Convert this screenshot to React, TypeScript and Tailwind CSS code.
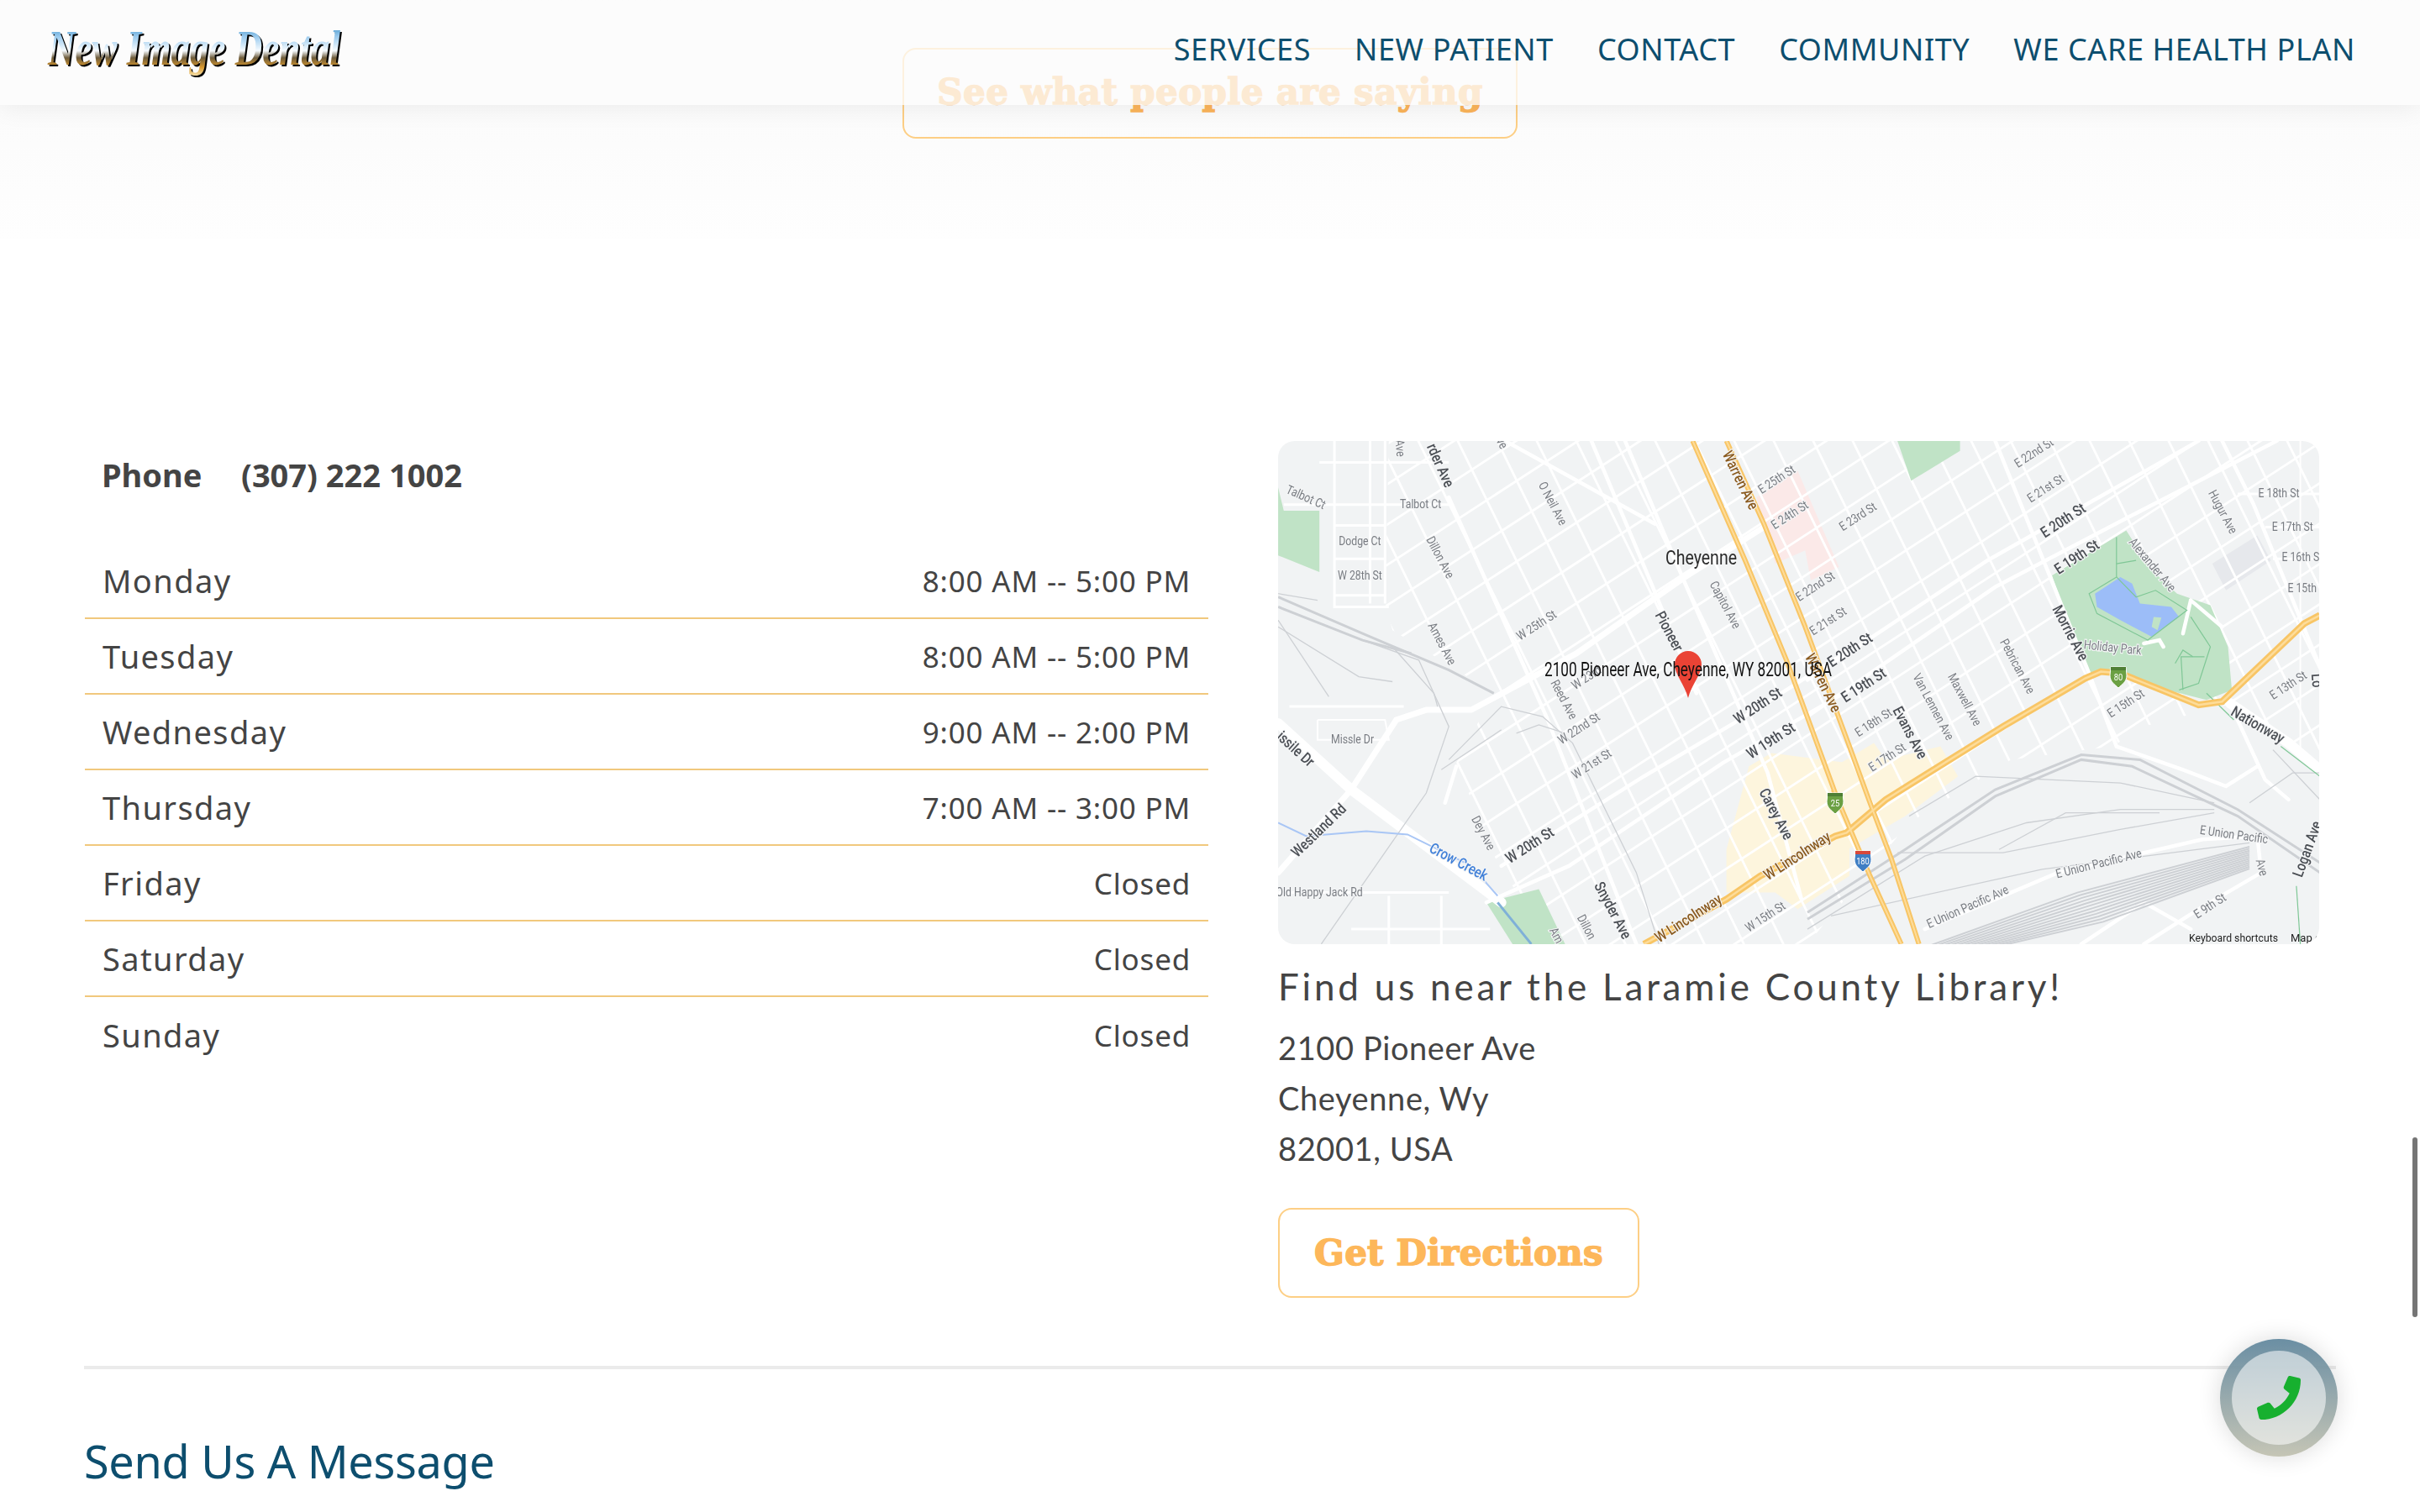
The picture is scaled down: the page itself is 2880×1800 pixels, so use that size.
import { FaPhone } from "react-icons/fa";

const NAV = ["SERVICES", "NEW PATIENT", "CONTACT", "COMMUNITY", "WE CARE HEALTH PLAN"];

const HOURS = [
  ["Monday", "8:00 AM -- 5:00 PM"],
  ["Tuesday", "8:00 AM -- 5:00 PM"],
  ["Wednesday", "9:00 AM -- 2:00 PM"],
  ["Thursday", "7:00 AM -- 3:00 PM"],
  ["Friday", "Closed"],
  ["Saturday", "Closed"],
  ["Sunday", "Closed"],
];

// map coordinates were read off two crops, so each side gets its own conversion
const a = (x: number, y: number) => [x / 2.24 - 20, y / 2.529 - 16];
const b = (x: number, y: number) => [x / 2.148 + 630, y / 2.529 - 16];

const line = (conv: typeof a, pts: number[][], close = false) =>
  pts.map(([x, y], i) => `${i ? "L" : "M"}${conv(x, y).map((n) => n.toFixed(1)).join(" ")}`).join("") + (close ? "Z" : "");

const GREEN = [
  line(a, [[45, 180], [60, 250], [155, 250], [155, 435], [45, 385]], true),
  line(a, [[600, 1430], [740, 1390], [810, 1555], [670, 1555]], true),
  line(b, [[230, 40], [390, 40], [390, 70], [265, 160]], true),
  line(b, [[625, 445], [815, 310], [880, 430], [945, 500], [1030, 535], [1075, 660], [1085, 790], [1020, 820], [920, 790], [810, 745], [720, 740], [690, 660]], true),
];

const CREAM = [
  line(a, [[1240, 1270], [1300, 1020], [1360, 980], [1568, 1010], [1568, 1350], [1430, 1450], [1370, 1400], [1240, 1400]], true),
  line(b, [[0, 1070], [170, 950], [200, 1000], [340, 960], [385, 1050], [250, 1170], [60, 1300], [0, 1420]], true),
];

const ARTERIES = [
  line(a, [[45, 890], [240, 1090], [640, 1430]]),
  line(a, [[45, 1340], [240, 1090], [360, 880], [440, 850], [560, 850], [840, 680], [1130, 450], [1340, 300]]),
  line(b, [[1080, 830], [1230, 950], [1310, 1030]]),
];

const WHITE_MID = [
  line(a, [[600, 1430], [820, 1320], [1230, 1010], [1568, 790]]),
  line(a, [[640, 1320], [1020, 1050], [1260, 890], [1568, 670]]),
  line(a, [[500, 210], [760, 870], [1000, 1555]]),
  line(a, [[970, 40], [1130, 470], [1350, 1040], [1440, 1420]]),
  line(a, [[880, 40], [1040, 470], [1160, 800]]),
  line(a, [[650, 40], [1050, 290]]),
  line(a, [[490, 1130], [520, 1020]]),
  line(b, [[0, 870], [480, 480], [820, 270], [1200, 40]]),
  line(b, [[0, 760], [460, 400], [1000, 40]]),
  line(b, [[480, 40], [720, 740], [790, 960], [960, 1030], [1070, 1080], [1150, 1020]]),
  line(b, [[1060, 40], [1140, 230], [1310, 720]]),
  line(b, [[1080, 830], [1170, 1060], [1230, 1120]]),
  line(b, [[980, 520], [960, 620]]),
  line(b, [[980, 520], [1060, 600]]),
  line(b, [[860, 650], [900, 640], [910, 660]]),
  line(b, [[300, 1510], [640, 1340], [1010, 1240], [1150, 1230]]),
  line(b, [[1150, 1230], [1160, 1340], [1000, 1450], [860, 1555]]),
  line(b, [[700, 1555], [860, 1430], [980, 1510]]),
];

const RAILS_THIN = [
  line(a, [[45, 500], [150, 520]]),
  line(a, [[45, 580], [180, 810]]),
  line(a, [[45, 600], [260, 750], [350, 765]]),
  line(a, [[270, 640], [420, 700], [500, 900], [440, 1100], [160, 1555]]),
  line(a, [[350, 660], [460, 800], [470, 840]]),
  line(a, [[480, 1030], [640, 910]]),
  line(a, [[500, 1000], [640, 840], [750, 870], [830, 950], [1000, 1340], [1060, 1555]]),
  line(a, [[680, 920], [740, 895], [810, 920]]),
  line(b, [[260, 1170], [430, 1050], [800, 1070], [1040, 1130]]),
  line(b, [[230, 1280], [500, 1280], [800, 1210], [1040, 1160]]),
  line(b, [[60, 1470], [600, 1330], [1130, 1250]]),
  line(b, [[1130, 1130], [1240, 1040], [1310, 1040]]),
  line(b, [[1190, 970], [1310, 1120]]),
  line(b, [[0, 1510], [300, 1290], [560, 1190], [800, 1150], [1040, 1150]]),
  line(b, [[490, 1270], [660, 1160], [900, 1160]]),
];

const RAILS_WIDE = [
  line(b, [[0, 1460], [250, 1270], [480, 1090], [700, 985], [850, 1000], [1100, 1150], [1310, 1310]]),
  line(b, [[0, 1480], [250, 1300], [480, 1110], [700, 1000], [830, 1020], [1100, 1170], [1310, 1340]]),
  line(a, [[45, 510], [270, 620], [500, 730], [620, 800]]),
  line(a, [[45, 540], [270, 640], [400, 680]]),
];

// rail yard, a bundle of parallel tracks
const YARD = Array.from({ length: 12 }, (_, i) =>
  line(b, [[300 + i * 16, 1565], [690 + i * 6, 1400 + i * 8], [1130, 1262 + i * 6]]),
);

const THIN_TRAIL = [
  line(b, [[790, 450], [720, 500], [740, 560], [870, 640], [970, 550], [890, 490], [840, 510], [790, 450]]),
  line(b, [[790, 330], [790, 450]]),
  line(b, [[790, 410], [840, 400]]),
  line(b, [[980, 570], [1030, 660], [1000, 770], [950, 790]]),
  line(b, [[960, 790], [955, 690], [1015, 690]]),
  line(b, [[940, 710], [960, 670], [985, 690]]),
  line(b, [[1020, 800], [1090, 880]]),
  line(b, [[1210, 960], [1310, 1050]]),
  line(b, [[1250, 1380], [1260, 1555]]),
];

// the block grid only covers the town, not the rail yards
const TOWN = `${line(a, [[340, 40], [330, 530], [350, 610], [620, 800], [520, 1010], [640, 1340], [800, 1555]])}L${b(0, 1555).join(" ")}L${b(260, 1190).join(" ")}L${b(520, 1000).join(" ")}L${b(780, 960).join(" ")}L${b(860, 900).join(" ")}L${b(1090, 830).join(" ")}L${b(1310, 1020).join(" ")}L${b(1310, 40).join(" ")}Z`;

const AVENUES = Array.from({ length: 32 }, (_, i) => -120 + i * 47);
const STREETS = Array.from({ length: 34 }, (_, i) => 40 + i * 48);

const LABEL_KIND: Record<string, { size: number; fill: string; weight?: number }> = {
  s: { size: 15, fill: "#787c82" },
  d: { size: 18, fill: "#4a4e54", weight: 500 },
  w: { size: 18, fill: "#8a5a1e", weight: 500 },
  c: { size: 18, fill: "#3f7fd8", weight: 500 },
};

type Label = [typeof a, number, number, string, number, string];

const LABELS: Label[] = [
  [a, 368, 62, "Ave", 85, "s"],
  [a, 475, 115, "rder Ave", 66, "d"],
  [a, 640, 48, "ve", 60, "s"],
  [a, 118, 212, "Talbot Ct", 24, "s"],
  [a, 425, 232, "Talbot Ct", 0, "s"],
  [a, 263, 343, "Dodge Ct", 0, "s"],
  [a, 263, 447, "W 28th St", 0, "s"],
  [a, 775, 230, "O Neil Ave", 62, "s"],
  [a, 475, 392, "Dillon Ave", 62, "s"],
  [a, 480, 652, "Ames Ave", 62, "s"],
  [a, 735, 597, "W 25th St", -33, "s"],
  [a, 1235, 535, "Capitol Ave", 62, "s"],
  [a, 1085, 615, "Pioneer", 62, "d"],
  [a, 868, 755, "W 23rd", -33, "s"],
  [a, 805, 820, "Reed Ave", 62, "s"],
  [a, 848, 908, "W 22nd St", -33, "s"],
  [a, 882, 1015, "W 21st St", -33, "s"],
  [a, 1325, 840, "W 20th St", -33, "d"],
  [a, 1360, 945, "W 19th St", -33, "d"],
  [a, 243, 942, "Missle Dr", 0, "s"],
  [a, 90, 970, "issile Dr", 42, "d"],
  [a, 155, 1215, "Westland Rd", -44, "d"],
  [a, 155, 1402, "Old Happy Jack Rd", 0, "s"],
  [a, 525, 1310, "Crow Creek", 28, "c"],
  [a, 590, 1222, "Dey Ave", 62, "s"],
  [a, 717, 1260, "W 20th St", -33, "d"],
  [a, 935, 1455, "Snyder Ave", 62, "d"],
  [a, 865, 1505, "Dillon", 62, "s"],
  [a, 785, 1530, "Am", 62, "s"],
  [a, 1140, 1480, "W Lincolnway", -33, "w"],
  [a, 1430, 1292, "W Lincolnway", -33, "w"],
  [a, 1345, 1475, "W 15th St", -33, "s"],
  [a, 1370, 1165, "Carey Ave", 62, "d"],
  [a, 1275, 160, "Warren Ave", 64, "w"],
  [a, 1495, 770, "Warren Ave", 64, "w"],
  [a, 1375, 158, "E 25th St", -33, "s"],
  [a, 1410, 265, "E 24th St", -33, "s"],
  [a, 1478, 480, "E 22nd St", -33, "s"],
  [a, 1512, 585, "E 21st St", -33, "s"],
  [b, 580, 78, "E 22nd St", -33, "s"],
  [b, 610, 185, "E 21st St", -33, "s"],
  [b, 130, 270, "E 23rd St", -33, "s"],
  [b, 655, 282, "E 20th St", -33, "d"],
  [b, 690, 392, "E 19th St", -33, "d"],
  [b, 1060, 255, "Hugur Ave", 62, "s"],
  [b, 1205, 200, "E 18th St", 0, "s"],
  [b, 1240, 302, "E 17th St", 0, "s"],
  [b, 1265, 393, "E 16th St", 0, "s"],
  [b, 1280, 485, "E 15th St", 0, "s"],
  [b, 880, 415, "Alexander Ave", 50, "s"],
  [b, 670, 620, "Morrie Ave", 62, "d"],
  [b, 780, 665, "Holiday Park", 6, "s"],
  [b, 535, 720, "Pebrican Ave", 62, "s"],
  [b, 400, 820, "Maxwell Ave", 62, "s"],
  [b, 320, 842, "Van Lennen Ave", 62, "s"],
  [b, 110, 672, "E 20th St", -33, "d"],
  [b, 145, 778, "E 19th St", -33, "d"],
  [b, 170, 890, "E 18th St", -33, "s"],
  [b, 260, 920, "Evans Ave", 62, "d"],
  [b, 205, 995, "E 17th St", -33, "s"],
  [b, 815, 832, "E 15th St", -33, "s"],
  [b, 1230, 778, "E 13th St", -33, "s"],
  [b, 1150, 898, "Nationway", 30, "d"],
  [b, 1090, 1228, "E Union Pacific", 8, "s"],
  [b, 1160, 1325, "Ave", 75, "s"],
  [b, 745, 1315, "E Union Pacific Ave", -14, "s"],
  [b, 410, 1445, "E Union Pacific Ave", -24, "s"],
  [b, 1030, 1442, "E 9th St", -33, "s"],
  [b, 1280, 1270, "Logan Ave", -70, "d"],
  [b, 1300, 762, "Lo", 85, "d"],
];

const Shield = ({ x, y, text, fill }: { x: number; y: number; text: string; fill: string }) => (
  <g transform={`translate(${x} ${y})`}>
    <path d="M-9 -12H9L10 -2C10 6 4 9 0 13C-4 9 -10 6 -10 -2Z" fill={fill} stroke="#fff" strokeWidth="1" />
    <rect x="-9" y="-12" width="18" height="4" fill={fill === "#3f7ec4" ? "#d9483b" : "#4f7f35"} />
    <text textAnchor="middle" y="4" fontSize="11" fill="#fff" fontFamily="Roboto, sans-serif" transform="scale(.85 1)">
      {text}
    </text>
  </g>
);

const LINCOLNWAY =
  line(a, [[1020, 1555], [1240, 1420], [1330, 1350], [1530, 1230]]) +
  line(b, [[100, 1220], [200, 1120], [500, 900], [710, 755], [750, 735], [800, 740], [1000, 835], [1060, 825], [1270, 590], [1310, 565]]).replace("M", "L");
const WARREN_W =
  line(a, [[1150, 40], [1290, 400], [1400, 700], [1530, 1100]]) + line(b, [[70, 1100], [160, 1350], [240, 1555]]).replace("M", "L");
const WARREN_E =
  line(a, [[1240, 40], [1340, 290], [1450, 600], [1568, 960]]) + line(b, [[160, 1130], [215, 1300], [285, 1555]]).replace("M", "L");

function MapImage() {
  return (
    <svg viewBox="0 0 1239 599" className="block h-[599px] w-[1239px] rounded-[20px] bg-[#f1f3f4] blur-[0.4px]">
      <defs>
        <clipPath id="town">
          <path d={TOWN} />
        </clipPath>
      </defs>
      {CREAM.map((d) => (
        <path key={d} d={d} fill="#fdf5dd" />
      ))}
      <path d={line(a, [[1320, 210], [1430, 130], [1540, 420], [1465, 460], [1450, 370], [1370, 410]], true)} fill="#fbe9e8" />
      <path d={line(b, [[1035, 410], [1150, 325], [1185, 400], [1070, 490]], true)} fill="#e6e8ec" />

      <g clipPath="url(#town)" stroke="#fff" strokeWidth="2.8" fill="none">
        {AVENUES.map((x0) => (
          <line key={x0} x1={x0} y1={-10} x2={x0 + 0.49 * 620} y2={610} />
        ))}
        {STREETS.map((y0) => (
          <line key={y0} x1={0} y1={y0} x2={1240} y2={y0 - 0.65 * 1240} />
        ))}
      </g>

      {GREEN.map((d) => (
        <path key={d} d={d} fill="#c0e3c6" />
      ))}

      {/* little upright grid top left */}
      <g stroke="#fff" strokeWidth="3" fill="none">
        <path d={line(a, [[195, 40], [195, 540], [340, 540]])} />
        <path d={line(a, [[290, 40], [290, 530]])} />
        <path d={line(a, [[330, 40], [330, 530]])} />
        <path d={line(a, [[155, 105], [500, 105]])} />
        <path d={line(a, [[60, 232], [500, 232]])} />
        <path d={line(a, [[195, 295], [330, 295]])} />
        <path d={line(a, [[195, 395], [330, 395]])} />
        <path d={line(a, [[195, 505], [330, 505]])} />
        <path d={line(a, [[150, 880], [330, 880], [340, 940], [150, 940], [150, 880]])} strokeWidth="2" />
        <path d={line(a, [[75, 840], [380, 840]])} />
        <path d={line(a, [[45, 1400], [500, 1400]])} />
        <path d={line(a, [[340, 1410], [340, 1555]])} />
        <path d={line(a, [[480, 1410], [480, 1555]])} />
        <path d={line(a, [[240, 1510], [610, 1510]])} />
        <path d={line(b, [[1260, 40], [1260, 1000]])} strokeWidth="2" />
        <path d={line(b, [[1100, 200], [1310, 200]])} />
        <path d={line(b, [[1170, 300], [1310, 300]])} />
        <path d={line(b, [[1190, 395], [1310, 395]])} />
      </g>

      <g fill="none" stroke="#fff" strokeLinecap="round">
        {ARTERIES.map((d, i) => (
          <path key={d} d={d} strokeWidth={i === 1 ? 7 : 12} />
        ))}
        {WHITE_MID.map((d) => (
          <path key={d} d={d} strokeWidth="4.5" />
        ))}
      </g>

      <g fill="none" stroke="#cdd0d4">
        {RAILS_THIN.map((d) => (
          <path key={d} d={d} strokeWidth="1.3" />
        ))}
        {RAILS_WIDE.map((d) => (
          <path key={d} d={d} strokeWidth="3" />
        ))}
        {YARD.map((d) => (
          <path key={d} d={d} strokeWidth="2" />
        ))}
      </g>
      <path d={line(b, [[800, 450], [830, 470], [850, 530], [930, 540], [950, 570], [880, 630], [800, 580], [740, 540], [735, 500]], true)} fill="#9cbdf8" />
      <path d={line(b, [[885, 570], [905, 572], [895, 610], [880, 600]], true)} fill="#c0e3c6" />
      <g fill="none" stroke="#7fc796" strokeWidth="1.2">
        {THIN_TRAIL.map((d) => (
          <path key={d} d={d} />
        ))}
      </g>
      <path d={line(a, [[45, 1190], [120, 1230], [280, 1215], [390, 1225], [560, 1320], [630, 1410]])} fill="none" stroke="#a9c6f5" strokeWidth="2" />
      <path d={line(a, [[630, 1430], [720, 1555]])} fill="none" stroke="#7fb0d8" strokeWidth="3" />

      {/* highways */}
      <g fill="none" stroke="#f8c565" strokeWidth="6">
        <path d={WARREN_W} />
        <path d={WARREN_E} />
        <path d={LINCOLNWAY} strokeWidth="8" />
      </g>
      <g fill="none" stroke="#fddc9a" strokeWidth="2">
        <path d={WARREN_W} />
        <path d={WARREN_E} />
        <path d={LINCOLNWAY} strokeWidth="2.5" />
      </g>

      <g fontFamily="Roboto, sans-serif" stroke="#f4f5f6" strokeWidth="2.5" style={{ paintOrder: "stroke" }}>
        {LABELS.map(([conv, x, y, text, rot, kind], i) => {
          const [px, py] = conv(x, y);
          const k = LABEL_KIND[kind];
          return (
            <text
              key={i}
              textAnchor="middle"
              dominantBaseline="middle"
              fontSize={k.size}
              fontWeight={k.weight ?? 400}
              fill={k.fill}
              transform={`translate(${px.toFixed(1)} ${py.toFixed(1)}) rotate(${rot}) scale(.82 1)`}
            >
              {text}
            </text>
          );
        })}
      </g>

      <Shield x={663} y={431} text="25" fill="#6ba043" />
      <Shield x={696} y={500} text="180" fill="#3f7ec4" />
      <Shield x={1000} y={281} text="80" fill="#6ba043" />

      <text x="461" y="147" fontSize="24" fill="#2b2b2b" fontFamily="Roboto, sans-serif" textLength="85" lengthAdjust="spacingAndGlyphs">
        Cheyenne
      </text>
      <path d="M488 306C484 290 472 278 472 266A16 16 0 0 1 504 266C504 278 492 290 488 306Z" fill="#ea4335" />
      <text x="317" y="280" fontSize="24" fill="#111" fontFamily="Roboto, sans-serif" textLength="342" lengthAdjust="spacingAndGlyphs">
        2100 Pioneer Ave, Cheyenne, WY 82001, USA
      </text>
      <text x="1084" y="596" fontSize="13" fill="#222" fontFamily="Roboto, sans-serif" textLength="106" lengthAdjust="spacingAndGlyphs">
        Keyboard shortcuts
      </text>
      <text x="1205" y="596" fontSize="13" fill="#222" fontFamily="Roboto, sans-serif">
        Map d
      </text>
    </svg>
  );
}

function Logo() {
  return (
    <svg viewBox="0 0 360 80" className="h-[80px] w-[360px] overflow-visible">
      <defs>
        <linearGradient id="chrome" x1="0" y1="0" x2="0" y2="1">
          <stop offset="0" stopColor="#1c7cba" />
          <stop offset="0.3" stopColor="#9ccbee" />
          <stop offset="0.55" stopColor="#f6fbff" />
          <stop offset="0.68" stopColor="#6e5c3c" />
          <stop offset="0.85" stopColor="#d9982c" />
          <stop offset="1" stopColor="#f5dfa8" />
        </linearGradient>
      </defs>
      <text x="5" y="56" fontFamily="'Liberation Serif', serif" fontStyle="italic" fontWeight="700" fontSize="60" textLength="348" lengthAdjust="spacingAndGlyphs" fill="#000">
        New Image Dental
      </text>
      <text x="3" y="54" fontFamily="'Liberation Serif', serif" fontStyle="italic" fontWeight="700" fontSize="60" textLength="348" lengthAdjust="spacingAndGlyphs" fill="url(#chrome)">
        New Image Dental
      </text>
    </svg>
  );
}

export default function App() {
  return (
    <div className="relative h-[1800px] w-full overflow-hidden bg-white font-['Noto_Sans',sans-serif] text-[#444]">
      <header className="absolute left-0 top-0 z-20 flex h-[125px] w-full items-center justify-between bg-[#fcfcfc]/75 pl-[54px] pr-[77px] shadow-[0_2px_30px_rgba(0,0,0,0.07)]">
        <Logo />
        <nav className="flex gap-[52px] pb-[8px] text-[36px] leading-[50px] tracking-[0.6px] text-[#0d4e6e]">
          {NAV.map((item) => (
            <a key={item}>{item}</a>
          ))}
        </nav>
      </header>

      <section className="flex h-[285px] justify-center bg-gradient-to-b from-[#f9f9f9] to-[#fefefe] pt-[57px]">
        <a className="flex h-[108px] w-[732px] justify-center rounded-[16px] border-2 border-[#fdcf85] pt-[26px] font-['DejaVu_Serif',serif] text-[42px] font-bold leading-[50px] tracking-[0.4px] text-[#fbb45a] [-webkit-text-stroke:1.5px_#fbb45a]">
          See what people are saying
        </a>
      </section>

      <section className="grid grid-cols-[1337px_1239px] gap-x-[83px] pl-[101px] pt-[240px]">
        <div>
          <div className="flex h-[80px] items-center pl-[20px] text-[38px] font-bold">
            <span className="w-[166px]">Phone</span>
            <span>(307) 222 1002</span>
          </div>
          <div className="mt-[42px]">
            {HOURS.map(([day, time], i) => (
              <div key={day} className={`flex h-[90px] items-center justify-between px-[21px] ${i < 6 ? "border-b-2 border-[#f1c87d]" : ""}`}>
                <span className="text-[38px] tracking-[1.4px]">{day}</span>
                <span className="pt-[2px] text-[35px] tracking-[0.8px]">{time}</span>
              </div>
            ))}
          </div>
        </div>

        <div>
          <MapImage />
          <h3 className="mt-[20px] font-['Lato',sans-serif] text-[44px] leading-[60px] tracking-[3.8px]">Find us near the Laramie County Library!</h3>
          <div className="mt-[13px] font-['Lato',sans-serif] text-[38px] leading-[60px] tracking-[0.6px]">
            <p>2100 Pioneer Ave</p>
            <p>Cheyenne, Wy</p>
            <p>82001, USA</p>
          </div>
          <a className="mt-[41px] flex h-[107px] w-[430px] items-center justify-center rounded-[16px] border-2 border-[#fdcf85] font-['DejaVu_Serif',serif] text-[42px] font-bold tracking-[0.2px] text-[#fdb75a] [-webkit-text-stroke:1.5px_#fdb75a]">
            Get Directions
          </a>
        </div>
      </section>

      <hr className="ml-[100px] mt-[81px] w-[2680px] border-t-4 border-[#ebebeb]" />
      <h2 className="ml-[100px] mt-[74px] text-[54px] leading-[70px] tracking-[-0.3px] text-[#0d4e6e]">Send Us A Message</h2>

      <div className="absolute right-[3px] top-[1354px] h-[214px] w-[6px] rounded-full bg-[#757575]" />

      <a className="absolute left-[2642px] top-[1594px] z-10 flex h-[140px] w-[140px] items-center justify-center rounded-full bg-gradient-to-b from-[#5a8299]/90 to-[#c5c5b5] shadow-[0_0_28px_rgba(0,0,0,0.14)]">
        <span className="flex h-[112px] w-[112px] items-center justify-center rounded-full bg-white/55">
          <FaPhone className="h-[52px] w-[52px] text-[#17b02f]" />
        </span>
      </a>
    </div>
  );
}
